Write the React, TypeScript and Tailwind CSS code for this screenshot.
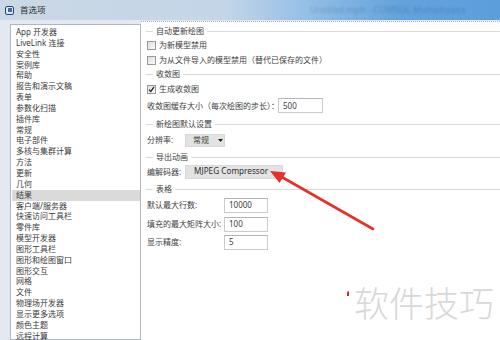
const items = [
  'App 开发器',
  'LiveLink 连接',
  '安全性',
  '案例库',
  '帮助',
  '报告和演示文稿',
  '表单',
  '参数化扫描',
  '插件库',
  '常规',
  '电子部件',
  '多核与集群计算',
  '方法',
  '更新',
  '几何',
  '结果',
  '客户端/服务器',
  '快速访问工具栏',
  '零件库',
  '模型开发器',
  '图形工具栏',
  '图形和绘图窗口',
  '图形交互',
  '网格',
  '文件',
  '物理场开发器',
  '显示更多选项',
  '颜色主题',
  '远程计算',
];

const Section = ({ title, className = '' }: { title: string; className?: string }) => (
  <div className={`flex items-center h-[14px] ${className}`}>
    <div className="w-[7px] h-px bg-[#d9d9d9]" />
    <span className="px-[3px]">{title}</span>
    <div className="flex-1 h-px bg-[#d9d9d9]" />
  </div>
);

const CheckBox = ({ checked = false }: { checked?: boolean }) => (
  <div className="w-[9px] h-[9px] border border-[#999] bg-[linear-gradient(135deg,#dedede,#fbfbfb)] flex items-center justify-center">
    {checked && (
      <svg width="7" height="7" viewBox="0 0 7 7">
        <path d="M1 3.6 L2.8 5.4 L6 1" fill="none" stroke="#2a2a2a" strokeWidth="1.3" />
      </svg>
    )}
  </div>
);

const Field = ({ value, className = '' }: { value: string; className?: string }) => (
  <div className={`h-[15px] border border-[#c9cbcf] border-t-[#b3b5ba] bg-white pl-[4px] flex items-center ${className}`}>
    {value}
  </div>
);

export default function App() {
  return (
    <div className="relative w-[500px] h-[340px] overflow-hidden bg-[#e2e9f1] font-['Noto_Sans','Noto_Sans_CJK_SC',sans-serif] text-[8px] text-[#3a3a3a]">
      {/* title bar */}
      <div className="relative h-[20px] flex items-center pl-[5px] bg-[linear-gradient(90deg,#cbd8e5_0%,#c3d5e8_45%,#93bee6_62%,#62a2dd_80%,#5c9edc_100%)]">
        <div className="w-[9px] h-[9px] rounded-[2px] border border-[#27466f] bg-[#dce8f4] flex items-center justify-center">
          <div className="w-[4px] h-[4px] bg-[#3c6ea8]" />
        </div>
        <span className="ml-[6px] text-[8.5px] text-[#2a2a2a]">首选项</span>
        <span className="absolute left-[310px] top-[3px] text-[9px] text-[#1d3657] opacity-25 blur-[0.8px]">
          Untitled.mph - COMSOL Multiphysics
        </span>
      </div>

      <div className="flex h-[320px] pl-[10px]">
        {/* list */}
        <div className="mt-[4px] w-[131px] border border-[#aeb7c0] bg-white pt-[2px] pl-px">
          {items.map((it) => (
            <div
              key={it}
              className={`h-[10.85px] leading-[10.85px] pl-[4px] whitespace-nowrap ${it === '结果' ? 'bg-[#dadada]' : ''}`}
            >
              {it}
            </div>
          ))}
        </div>

        {/* right panel */}
        <div className="flex-1 mt-[1px] border-t border-dotted border-[#a3adb8] bg-white pl-[5px] text-[#404040]">
          <Section title="自动更新绘图" className="mt-[2px]" />
          <div className="flex items-center h-[14px] pl-px gap-[3px]">
            <CheckBox />
            <span>为新模型禁用</span>
          </div>
          <div className="flex items-center h-[14px] mt-px pl-px gap-[3px]">
            <CheckBox />
            <span>为从文件导入的模型禁用（替代已保存的文件）</span>
          </div>
          <Section title="收敛图" className="h-[13px]" />
          <div className="flex items-center h-[14px] mt-px pl-px gap-[3px]">
            <CheckBox checked />
            <span>生成收敛图</span>
          </div>
          <div className="flex items-center h-[15px] mt-[2px] pl-px">
            <span className="w-[131px] whitespace-nowrap">收敛图缓存大小（每次绘图的步长）：</span>
            <Field value="500" className="w-[45px]" />
          </div>
          <Section title="新绘图默认设置" className="mt-[4px]" />
          <div className="flex items-center h-[14px] mt-[2px] pl-px">
            <span className="w-[38px]">分辨率:</span>
            <div className="w-[40px] h-[13px] bg-[#e3e3e3] border border-[#d8d8d8] flex items-center pl-[7px] gap-[9px]">
              <span>常规</span>
              <svg width="5" height="3" viewBox="0 0 5 3">
                <path d="M0 0 H5 L2.5 3 Z" fill="#222" />
              </svg>
            </div>
          </div>
          <Section title="导出动画" className="mt-[3px]" />
          <div className="flex items-center h-[15px] pl-px">
            <span className="w-[38px]">编解码器:</span>
            <div className="w-[98px] h-[14px] bg-[#e3e3e3] border border-[#d8d8d8] flex items-center pl-[8px] text-[8.2px] text-[#2e2e2e]">
              MJPEG Compressor
            </div>
          </div>
          <Section title="表格" className="mt-[3px]" />
          <div className="flex items-center h-[16px] mt-px pl-px">
            <span className="w-[77px]">默认最大行数:</span>
            <Field value="10000" className="w-[44px]" />
          </div>
          <div className="flex items-center h-[16px] mt-[3px] pl-px">
            <span className="w-[77px] whitespace-nowrap">填充的最大矩阵大小:</span>
            <Field value="100" className="w-[44px]" />
          </div>
          <div className="flex items-center h-[16px] mt-[2px] pl-px">
            <span className="w-[77px]">显示精度:</span>
            <Field value="5" className="w-[44px]" />
          </div>
        </div>
      </div>

      {/* red annotation arrow */}
      <svg className="absolute left-0 top-0 pointer-events-none" width="500" height="340" viewBox="0 0 500 340">
        <line x1="373" y1="229" x2="280" y2="176" stroke="#e4322b" strokeWidth="2.6" strokeLinecap="round" />
        <polygon points="270,171 286,172.5 279.5,183" fill="#e4322b" />
        <path d="M347 292 L349 291 L349 296 L347 296 Z" fill="#d8282a" />
      </svg>

      {/* watermark */}
      <div className="absolute left-[354px] top-[280px] text-[35px] leading-[44px] text-[#d8d8d8] font-['Noto_Sans_CJK_SC',sans-serif] font-light">
        软件技巧
      </div>
    </div>
  );
}
